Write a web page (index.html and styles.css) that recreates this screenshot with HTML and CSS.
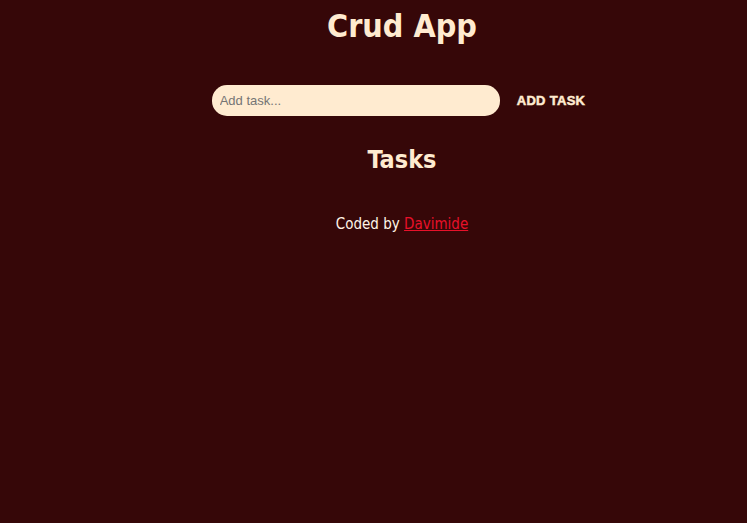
FILE: index.html
```html
<!DOCTYPE html>
<html>
<head>
<meta charset="utf-8">
<link rel="stylesheet" href="styles.css">
</head>
<body>
<main class="app">
  <h1 class="title">Crud App</h1>
  <form class="task-form">
    <input class="task-input" type="text" placeholder="Add task...">
    <button class="add-btn" type="button">ADD TASK</button>
  </form>
  <h2 class="tasks-title">Tasks</h2>
  <ul class="task-list"></ul>
  <footer class="credits">Coded by <a href="#" class="credits-link">Davimide</a></footer>
</main>
</body>
</html>
```
FILE: styles.css
```css
html, body {
  margin: 0;
  padding: 0;
  background: #360708;
}
body {
  font-family: "DejaVu Sans Condensed", "DejaVu Sans", Verdana, sans-serif;
  color: #ffebd0;
  min-height: 523px;
}
.app {
  display: flex;
  flex-direction: column;
  align-items: center;
  padding: 8px 0 0 57px;
}
.title {
  margin: 0;
  font-size: 32px;
  font-weight: bold;
  line-height: 37px;
}
.task-form {
  display: flex;
  align-items: center;
  gap: 17px;
  margin-top: 40px;
  padding-right: 7px;
}
.task-input {
  width: 288px;
  height: 31px;
  box-sizing: border-box;
  border: none;
  border-radius: 15px;
  background: #ffebd0;
  padding: 0 8px;
  font-family: "Liberation Sans", Arial, sans-serif;
  font-size: 13px;
  color: #333;
  outline: none;
}
.task-input::placeholder {
  color: #757575;
}
.add-btn {
  background: none;
  border: none;
  padding: 0;
  color: #ffebd0;
  font-family: "Liberation Sans", Arial, sans-serif;
  font-weight: 900;
  font-size: 13px;
  letter-spacing: 0.3px;
  -webkit-text-stroke: 0.5px #ffebd0;
  cursor: pointer;
}
.tasks-title {
  margin: 31px 0 0;
  font-size: 25px;
  font-weight: bold;
  line-height: 26px;
}
.task-list {
  margin: 0;
  padding: 0;
  list-style: none;
}
.credits {
  margin-top: 42px;
  font-size: 15px;
  color: #fff3e6;
}
.credits-link {
  color: #e8112a;
  text-decoration: underline;
}
```
